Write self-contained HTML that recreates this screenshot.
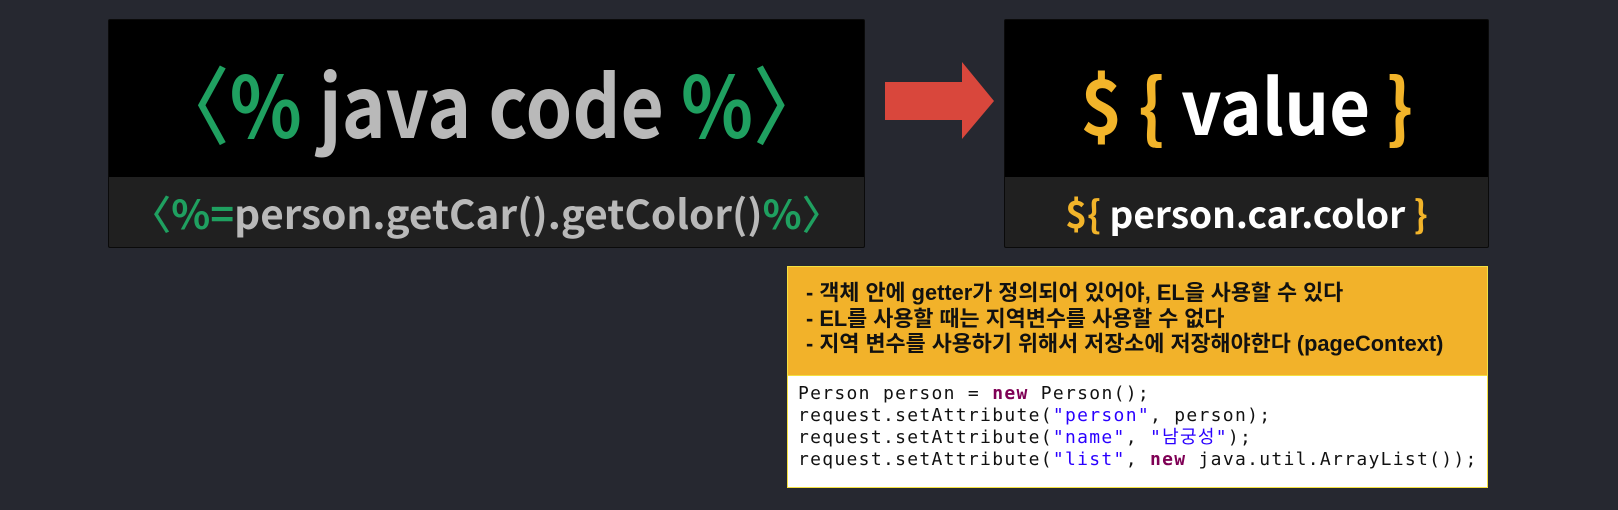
<!DOCTYPE html>
<html><head><meta charset="utf-8"><style>
*{margin:0;padding:0;box-sizing:border-box}
body{width:1618px;height:510px;background:#262830;position:relative;overflow:hidden;font-family:"Noto Sans CJK KR","Liberation Sans",sans-serif}
.box{position:absolute;background:#000;border:1px solid #0a0a0a;border-radius:2px;overflow:hidden}
.bot{position:absolute;left:0;right:0;bottom:0;background:#202020}
.c{position:absolute;left:0;right:0;text-align:center;white-space:nowrap;font-weight:700}
.c span.in{display:inline-block}
.g{color:#1fa060}.gr{color:#b9b9b9}.y{color:#f2b42a}.w{color:#fff}
.note{position:absolute;left:787px;top:266px;width:701px;height:110px;background:#f2b22a;border:1px solid #f4e040;font-family:"Liberation Sans","Noto Sans CJK KR",sans-serif;font-weight:700;font-size:21.8px;color:#111;padding:13px 0 0 18px;line-height:25.5px;white-space:nowrap}
.code{position:absolute;left:787px;top:376px;width:701px;height:112px;background:#fff;border:1px solid #f4e040;border-top:none;font-family:"DejaVu Sans Mono","Noto Sans CJK KR",monospace;font-size:18px;letter-spacing:1.3px;color:#111;padding:7px 0 0 10px;line-height:22px;white-space:pre}
.k{color:#7f0055;font-weight:700}.s{color:#2a00ff}
</style></head><body>
<div class="box" style="left:108px;top:19px;width:757px;height:229px">
 <div class="c" style="top:32px;font-size:85px;line-height:100px"><span class="in" style="transform:scaleX(0.88)"><span class="g" style="font-weight:500">〈</span><span class="g">%</span> <span class="gr">java code</span> <span class="g">%</span><span class="g" style="font-weight:500">〉</span></span></div>
 <div class="bot" style="top:157px"></div>
 <div class="c" style="top:164px;font-size:40px;line-height:56px;font-weight:600"><span class="in" style="transform:scaleX(1.012)"><span class="g" style="font-weight:500">〈</span><span class="g">%=</span><span class="gr">person.getCar().getColor()</span><span class="g">%</span><span class="g" style="font-weight:500">〉</span></span></div>
</div>
<svg style="position:absolute;left:0;top:0" width="1618" height="510"><polygon points="885,82 962,82 962,62 994,101 962,139 962,120 885,120" fill="#d9473c"/></svg>
<div class="box" style="left:1004px;top:19px;width:485px;height:229px">
 <div class="c" style="top:32px;font-size:76px;line-height:100px"><span class="in" style="transform:scaleX(0.93)"><span class="y">$ {</span> <span class="w">value</span> <span class="y">}</span></span></div>
 <div class="bot" style="top:157px"></div>
 <div class="c" style="top:164px;font-size:37px;line-height:56px"><span class="y">${</span> <span class="w">person.car.color</span> <span class="y">}</span></div>
</div>
<div class="note">- 객체 안에 getter가 정의되어 있어야, EL을 사용할 수 있다<br>- EL를 사용할 때는 지역변수를 사용할 수 없다<br>- 지역 변수를 사용하기 위해서 저장소에 저장해야한다 (pageContext)</div>
<div class="code">Person person = <span class="k">new</span> Person();
request.setAttribute(<span class="s">"person"</span>, person);
request.setAttribute(<span class="s">"name"</span>, <span class="s">"남궁성"</span>);
request.setAttribute(<span class="s">"list"</span>, <span class="k">new</span> java.util.ArrayList());</div>
</body></html>
